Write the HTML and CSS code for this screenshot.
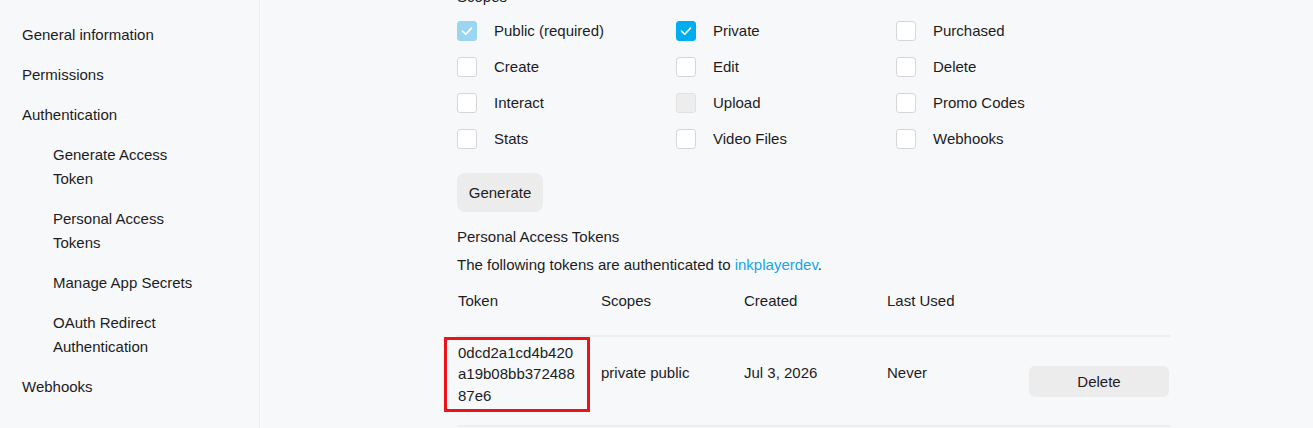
FILE: index.html
```html
<!DOCTYPE html>
<html lang="en">
<head>
<meta charset="utf-8">
<title>Authentication</title>
<link rel="stylesheet" href="styles.css">
</head>
<body>
<div class="layout">
  <nav class="sidebar">
    <a class="nav-item">General information</a>
    <a class="nav-item">Permissions</a>
    <a class="nav-item">Authentication</a>
    <a class="nav-item sub">Generate Access Token</a>
    <a class="nav-item sub">Personal Access Tokens</a>
    <a class="nav-item sub">Manage App Secrets</a>
    <a class="nav-item sub">OAuth Redirect Authentication</a>
    <a class="nav-item">Webhooks</a>
  </nav>
  <main class="main">
    <h3 class="scopes-title">Scopes</h3>
    <div class="scopes">
      <label class="scope"><span class="box checked disabled"><svg viewBox="0 0 20 20"><polyline points="5,10.2 8.6,13.6 15,6.8"/></svg></span>Public (required)</label>
      <label class="scope"><span class="box checked"><svg viewBox="0 0 20 20"><polyline points="5,10.2 8.6,13.6 15,6.8"/></svg></span>Private</label>
      <label class="scope"><span class="box"></span>Purchased</label>
      <label class="scope"><span class="box"></span>Create</label>
      <label class="scope"><span class="box"></span>Edit</label>
      <label class="scope"><span class="box"></span>Delete</label>
      <label class="scope"><span class="box"></span>Interact</label>
      <label class="scope"><span class="box disabled"></span>Upload</label>
      <label class="scope"><span class="box"></span>Promo Codes</label>
      <label class="scope"><span class="box"></span>Stats</label>
      <label class="scope"><span class="box"></span>Video Files</label>
      <label class="scope"><span class="box"></span>Webhooks</label>
    </div>
    <button class="btn generate">Generate</button>
    <h4 class="section-title">Personal Access Tokens</h4>
    <p class="intro">The following tokens are authenticated to <a class="link">inkplayerdev</a>.</p>
    <div class="table">
      <div class="thead">
        <div class="th">Token</div>
        <div class="th">Scopes</div>
        <div class="th">Created</div>
        <div class="th">Last Used</div>
        <div class="th"></div>
      </div>
      <div class="row">
        <div class="td token"><span class="token-text">0dcd2a1cd4b420a19b08bb37248887e6</span></div>
        <div class="td">private public</div>
        <div class="td">Jul 3, 2026</div>
        <div class="td">Never</div>
        <div class="td action"><button class="btn delete">Delete</button></div>
      </div>
    </div>
  </main>
</div>
</body>
</html>
```

FILE: styles.css
```css
*, *::before, *::after { box-sizing: border-box; }
html, body {
  margin: 0;
  height: 100%;
  background: #f7f8fa;
  font-family: "Liberation Sans", Arial, sans-serif;
  font-size: 15px;
  color: #1c1c1e;
  overflow: hidden;
}
.layout {
  display: flex;
  min-height: 100%;
}
.sidebar {
  width: 260px;
  flex: none;
  border-right: 1px solid #eceef1;
  padding: 23px 0 0 22px;
  display: flex;
  flex-direction: column;
  gap: 16px;
}
.nav-item {
  line-height: 24px;
  color: #1c1c1e;
  text-decoration: none;
}
.nav-item.sub {
  padding-left: 31px;
  max-width: 180px;
}
.main {
  flex: 1;
  padding-left: 197px;
}
.scopes-title {
  margin: -15px 0 12px;
  font-size: 15px;
  font-weight: normal;
  line-height: 24px;
}
.scopes {
  display: grid;
  grid-template-columns: 219px 220px 220px;
  row-gap: 16px;
}
.scope {
  display: flex;
  align-items: center;
  gap: 17px;
  height: 20px;
  line-height: 20px;
}
.box {
  width: 20px;
  height: 20px;
  flex: none;
  border: 1px solid #d4d6d9;
  border-radius: 3px;
  background: #ffffff;
  display: flex;
  align-items: center;
  justify-content: center;
}
.box svg {
  width: 20px;
  height: 20px;
  fill: none;
  stroke: #ffffff;
  stroke-width: 1.8;
  stroke-linecap: round;
  stroke-linejoin: round;
}
.box.checked {
  background: #00adef;
  border-color: #00adef;
}
.box.disabled {
  background: #ededee;
  border-color: #e0e1e3;
}
.box.checked.disabled {
  background: #9ad6f2;
  border-color: #9ad6f2;
}
.btn {
  font-family: inherit;
  font-size: 15px;
  color: #1c1c1e;
  border: none;
  background: #ececed;
  cursor: pointer;
}
.generate {
  display: block;
  margin-top: 24px;
  height: 39px;
  width: 86px;
  padding: 0;
  border-radius: 8px;
}
.section-title {
  margin: 13px 0 0;
  font-size: 15px;
  font-weight: normal;
  line-height: 24px;
}
.intro {
  margin: 4px 0 0;
  line-height: 24px;
}
.link {
  color: #15a6e6;
  text-decoration: none;
}
.table {
  width: 713px;
  margin-top: 12px;
}
.thead, .row {
  display: grid;
  grid-template-columns: 143px 143px 143px 143px 141px;
}
.thead {
  border-bottom: 2px solid #eceef0;
  height: 48px;
}
.th {
  line-height: 24px;
  padding-left: 1px;
}
.row {
  border-bottom: 2px solid #eceef0;
  height: 90px;
  align-items: center;
}
.td {
  line-height: 21.5px;
  padding-left: 1px;
  padding-bottom: 17px;
}
.td.token {
  position: relative;
  padding-bottom: 14px;
}
.token-text {
  display: block;
  width: 122px;
  word-break: break-all;
}
.td.token::after {
  content: "";
  position: absolute;
  left: -13px;
  top: -5px;
  width: 146px;
  height: 75px;
  border: 3px solid #e8131b;
}
.td.action {
  padding: 0;
  display: flex;
  align-items: center;
}
.delete {
  width: 140px;
  height: 31px;
  border-radius: 6px;
  padding: 0;
}
```
